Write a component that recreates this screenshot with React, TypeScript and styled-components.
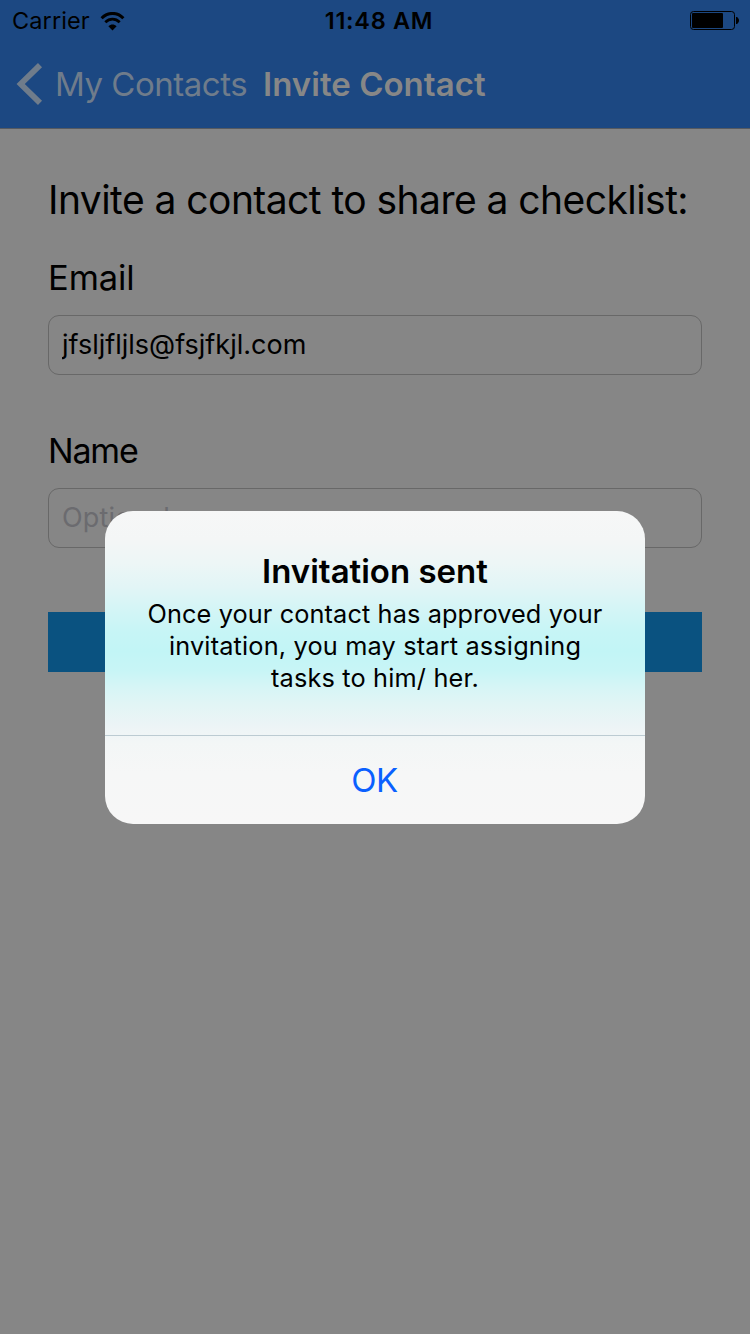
import React from "react";
import styled, { createGlobalStyle } from "styled-components";

const GlobalStyle = createGlobalStyle`
  * { box-sizing: border-box; }
  body {
    margin: 0;
    background: #868686;
    font-family: Inter, "Liberation Sans", sans-serif;
    color: #000;
  }
`;

const Screen = styled.div`
  position: relative;
  width: 750px;
  height: 1334px;
  overflow: hidden;
  background: #868686;
`;

const Header = styled.header`
  height: 129px;
  background: #1c4882;
  border-bottom: 1px solid #565a60;
`;

const StatusBar = styled.div`
  display: grid;
  grid-template-columns: 1fr auto 1fr;
  align-items: center;
  height: 40px;
  padding: 1px 11px 0 12px;
`;

const Carrier = styled.div`
  display: flex;
  align-items: center;
  gap: 10px;
`;

const Text = styled.span<{ $size: number; $weight?: number; $spacing?: number; $line?: number; $color?: string }>`
  display: block;
  white-space: nowrap;
  font-size: ${(p) => p.$size}px;
  font-weight: ${(p) => p.$weight ?? 400};
  letter-spacing: ${(p) => p.$spacing ?? 0}px;
  line-height: ${(p) => p.$line ?? 40}px;
  color: ${(p) => p.$color ?? "#000"};
`;

const Clock = styled(Text)`
  padding-left: 7px;
`;

const BatterySlot = styled.div`
  display: flex;
  justify-content: flex-end;
  padding-bottom: 1px;
`;

const NavBar = styled.nav`
  display: flex;
  align-items: center;
  height: 88px;
  padding-left: 16px;
`;

const BackButton = styled.button`
  display: flex;
  align-items: center;
  gap: 11px;
  width: 247px;
  padding: 0;
  border: 0;
  background: none;
  font-family: inherit;
  text-align: left;
`;

const Form = styled.main`
  display: flex;
  flex-direction: column;
  padding: 47px 48px 0;
`;

const Heading = styled.h1`
  margin: 0 0 31px;
`;

const Field = styled.label<{ $after: number }>`
  display: flex;
  flex-direction: column;
  gap: 14px;
  margin-bottom: ${(p) => p.$after}px;
`;

const Input = styled.input`
  height: 60px;
  padding: 0 13px 2px;
  border: 1px solid #686868;
  border-radius: 11px;
  outline: none;
  background: transparent;
  color: #000;
  font: 400 27px Inter, "Liberation Sans", sans-serif;
  letter-spacing: 0;
  &::placeholder {
    color: #6b6b6f;
    opacity: 1;
    letter-spacing: 0.2px;
  }
`;

const SubmitButton = styled.button`
  height: 60px;
  border: 0;
  background: #0a5280;
`;

const Dialog = styled.section`
  position: absolute;
  top: 511px;
  left: 105px;
  display: flex;
  flex-direction: column;
  width: 540px;
  height: 313px;
  border-radius: 28px;
  overflow: hidden;
  background: linear-gradient(
    180deg,
    #f6f7f7 0px,
    #f4f6f6 28px,
    #edf6f6 52px,
    #e2f5f6 76px,
    #d4f5f6 98px,
    #c7f5f6 120px,
    #c2f5f6 140px,
    #c8f5f6 160px,
    #d6f5f6 176px,
    #e2f5f5 194px,
    #ecf4f6 214px,
    #f3f6f6 232px,
    #f6f7f7 262px,
    #f7f7f7 313px
  );
`;

const DialogBody = styled.div`
  display: flex;
  flex-direction: column;
  align-items: center;
  height: 225px;
  padding-top: 40px;
  border-bottom: 1px solid #bccbd2;
`;

const Message = styled.div`
  display: flex;
  flex-direction: column;
  align-items: center;
  margin-top: 7px;
`;

const OkButton = styled.button`
  display: flex;
  flex: 1;
  align-items: center;
  justify-content: center;
  border: 0;
  padding: 0 1px 0 0;
  background: none;
  font-family: inherit;
`;

const WifiIcon = () => (
  <svg width="26" height="19" viewBox="0 0 26 19" fill="none">
    <path d="M1.6 6.2C8 -0.2 17.2 -0.2 23.4 6.2" stroke="#000" strokeWidth="3" />
    <path d="M5.3 10.2C9.6 6.1 15.4 6.1 19.7 10.2" stroke="#000" strokeWidth="2.8" />
    <path d="M8.4 14.2C10.8 12 14.2 12 16.6 14.2L12.5 18.4Z" fill="#000" />
  </svg>
);

const BatteryIcon = () => (
  <svg width="49" height="19" viewBox="0 0 49 19" fill="none">
    <rect x="0.5" y="0.5" width="44" height="18" rx="3" stroke="#000" />
    <rect x="2" y="2" width="31" height="15" rx="1" fill="#000" />
    <path d="M46 6H47C48.3 7 49 8.2 49 9.5S48.3 12 47 13H46Z" fill="#000" />
  </svg>
);

const BackChevron = () => (
  <svg width="28" height="42" viewBox="0 0 28 42" fill="none">
    <path d="M24 2.2L4.7 21L24 39.8" stroke="#6f7c8b" strokeWidth="5.8" />
  </svg>
);

export default function App() {
  return (
    <>
      <GlobalStyle />
      <Screen>
        <Header>
          <StatusBar>
            <Carrier>
              <Text $size={23.5} $spacing={0.1}>Carrier</Text>
              <WifiIcon />
            </Carrier>
            <Clock $size={23.5} $weight={600} $spacing={0.7}>11:48 AM</Clock>
            <BatterySlot>
              <BatteryIcon />
            </BatterySlot>
          </StatusBar>
          <NavBar>
            <BackButton>
              <BackChevron />
              <Text $size={33} $spacing={-0.48} $color="#6f7c8b">My Contacts</Text>
            </BackButton>
            <Text $size={33} $weight={600} $spacing={0.03} $color="#878787">Invite Contact</Text>
          </NavBar>
        </Header>
        <Form>
          <Heading>
            <Text $size={39} $line={48} $spacing={-0.55}>Invite a contact to share a checklist:</Text>
          </Heading>
          <Field $after={53}>
            <Text $size={34.5} $line={46} $spacing={-0.1}>Email</Text>
            <Input defaultValue="jfsljfljls@fsjfkjl.com" />
          </Field>
          <Field $after={64}>
            <Text $size={34} $line={46} $spacing={-1.2}>Name</Text>
            <Input placeholder="Optional" />
          </Field>
          <SubmitButton />
        </Form>
        <Dialog role="alertdialog">
          <DialogBody>
            <Text $size={33} $weight={600}>Invitation sent</Text>
            <Message>
              <Text $size={25.3} $line={32} $spacing={0.11}>Once your contact has approved your</Text>
              <Text $size={25.3} $line={32} $spacing={0.17}>invitation, you may start assigning</Text>
              <Text $size={25.3} $line={32} $spacing={0.17}>tasks to him/ her.</Text>
            </Message>
          </DialogBody>
          <OkButton>
            <Text $size={33} $spacing={-0.4} $color="#0a60ff">OK</Text>
          </OkButton>
        </Dialog>
      </Screen>
    </>
  );
}
